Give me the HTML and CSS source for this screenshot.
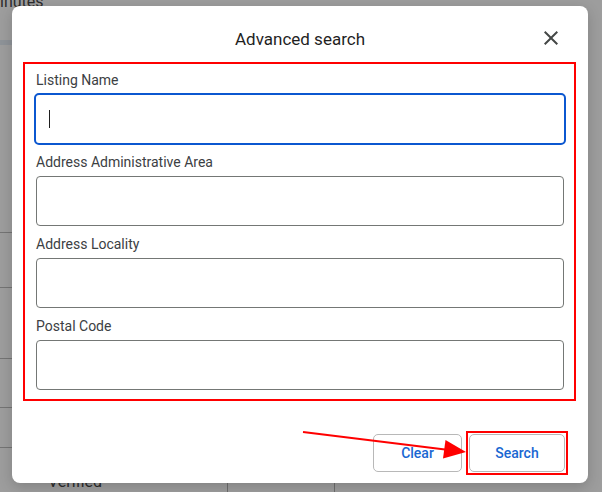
FILE: index.html
```html
<!DOCTYPE html>
<html lang="en">
<head>
<meta charset="utf-8">
<title>Advanced search</title>
<link rel="stylesheet" href="styles.css">
</head>
<body>
<div class="page">
  <div class="bg-head">inutes</div>
  <div class="bg-band"></div>
  <div class="bg-table">
    <div class="bg-row r1"></div>
    <div class="bg-row r2"></div>
    <div class="bg-row r3"></div>
    <div class="bg-row r4"></div>
    <div class="bg-row r5"></div>
    <div class="bg-row last">
      <div class="cell c1">Verified</div>
      <div class="cell c2"></div>
    </div>
  </div>
</div>

<div class="dialog" role="dialog" aria-label="Advanced search">
  <div class="dialog-header">
    <span></span>
    <h2 class="dialog-title">Advanced search</h2>
    <button class="close-btn" aria-label="Close">
      <svg width="24" height="24" viewBox="0 0 24 24"><path d="M19 6.41L17.59 5 12 10.59 6.41 5 5 6.41 10.59 12 5 17.59 6.41 19 12 13.41 17.59 19 19 17.59 13.41 12z" fill="#444746"/></svg>
    </button>
  </div>
  <div class="fields">
    <div class="field">
      <div class="label">Listing Name</div>
      <div class="input focused"><span class="caret"></span></div>
    </div>
    <div class="field">
      <div class="label">Address Administrative Area</div>
      <div class="input"></div>
    </div>
    <div class="field">
      <div class="label">Address Locality</div>
      <div class="input"></div>
    </div>
    <div class="field">
      <div class="label">Postal Code</div>
      <div class="input"></div>
    </div>
  </div>
  <div class="dialog-footer">
    <button class="btn btn-clear">Clear</button>
    <span class="highlight"><button class="btn btn-search">Search</button></span>
  </div>
</div>

<svg class="annotation" width="602" height="492" viewBox="0 0 602 492">
  <line x1="303" y1="432" x2="445" y2="449.5" stroke="#ff0000" stroke-width="2"/>
  <polygon points="466,452 443,458.5 445.5,440" fill="#ff0000"/>
</svg>
</body>
</html>
```
FILE: styles.css
```css
* { box-sizing: border-box; }
html, body { margin: 0; padding: 0; }
body {
  width: 602px;
  height: 492px;
  overflow: hidden;
  background: #9d9d9d;
  font-family: Roboto, "Noto Sans", Arial, sans-serif;
  position: relative;
}

/* background page (under the scrim) */
.page { width: 602px; height: 492px; overflow: hidden; }
.bg-head {
  margin-top: -6px;
  font-size: 16px;
  line-height: 16px;
  color: #2c2c2c;
}
.bg-band {
  margin-top: 30px;
  height: 5px;
  width: 335px;
  background: #8e9398;
}
.bg-table { width: 335px; }
.bg-row { border-bottom: 1px solid #747474; }
.r1 { height: 188px; }
.r2 { height: 55px; }
.r3 { height: 71px; }
.r4 { height: 49px; }
.r5 { height: 40px; }
.bg-row.last {
  border-bottom: none;
  display: grid;
  grid-template-columns: 228px 107px;
  height: 60px;
}
.cell { border-right: 1px solid #6e6e6e; }
.c1 {
  padding: 24px 0 0 48px;
  font-size: 16px;
  line-height: 20px;
  color: #2c2c2c;
}

/* dialog */
.dialog {
  position: absolute;
  left: 12px;
  top: 6px;
  width: 576px;
  background: #fff;
  border-radius: 8px;
  box-shadow: 0 4px 14px rgba(0,0,0,0.18);
}
.dialog-header {
  height: 56px;
  padding: 10px 25px 0 25px;
  display: grid;
  grid-template-columns: 1fr auto 1fr;
  align-items: center;
}
.dialog-title {
  margin: 0;
  font-size: 17px;
  font-weight: 400;
  color: #1f1f1f;
  line-height: 22px;
}
.close-btn {
  justify-self: end;
  margin-top: -2px;
  width: 24px;
  height: 24px;
  padding: 0;
  border: none;
  background: none;
  display: flex;
}

.fields {
  margin: 0 12px 0 11px;
  border: 2px solid #ff0000;
  padding: 6px 10px 9px 11px;
  display: flex;
  flex-direction: column;
  gap: 8px;
}
.label {
  font-size: 14px;
  line-height: 20px;
  color: #3c4043;
  margin-bottom: 4px;
}
.input {
  height: 50px;
  border: 1px solid #747775;
  border-radius: 4px;
}
.input.focused {
  height: 52px;
  margin: -1px -2px;
  border: 2px solid #0b57d0;
  border-radius: 5px;
  display: flex;
  align-items: center;
  padding-left: 13px;
}
.caret {
  width: 1px;
  height: 18px;
  background: #1f1f1f;
}

.dialog-footer {
  display: flex;
  justify-content: flex-end;
  align-items: center;
  gap: 4px;
  padding: 30px 20px 8px 0;
}
.btn {
  height: 38px;
  border: 1px solid #b8b8b8;
  border-radius: 5px;
  background: #fff;
  font-family: Roboto, "Noto Sans", Arial, sans-serif;
  font-size: 14px;
  font-weight: 500;
  color: #1967d2;
  padding: 0;
}
.btn-clear { width: 89px; }
.highlight {
  display: flex;
  border: 2px solid #ff0000;
  padding: 1px;
}
.btn-search { width: 96px; }

.annotation {
  position: absolute;
  left: 0;
  top: 0;
  pointer-events: none;
}
```
